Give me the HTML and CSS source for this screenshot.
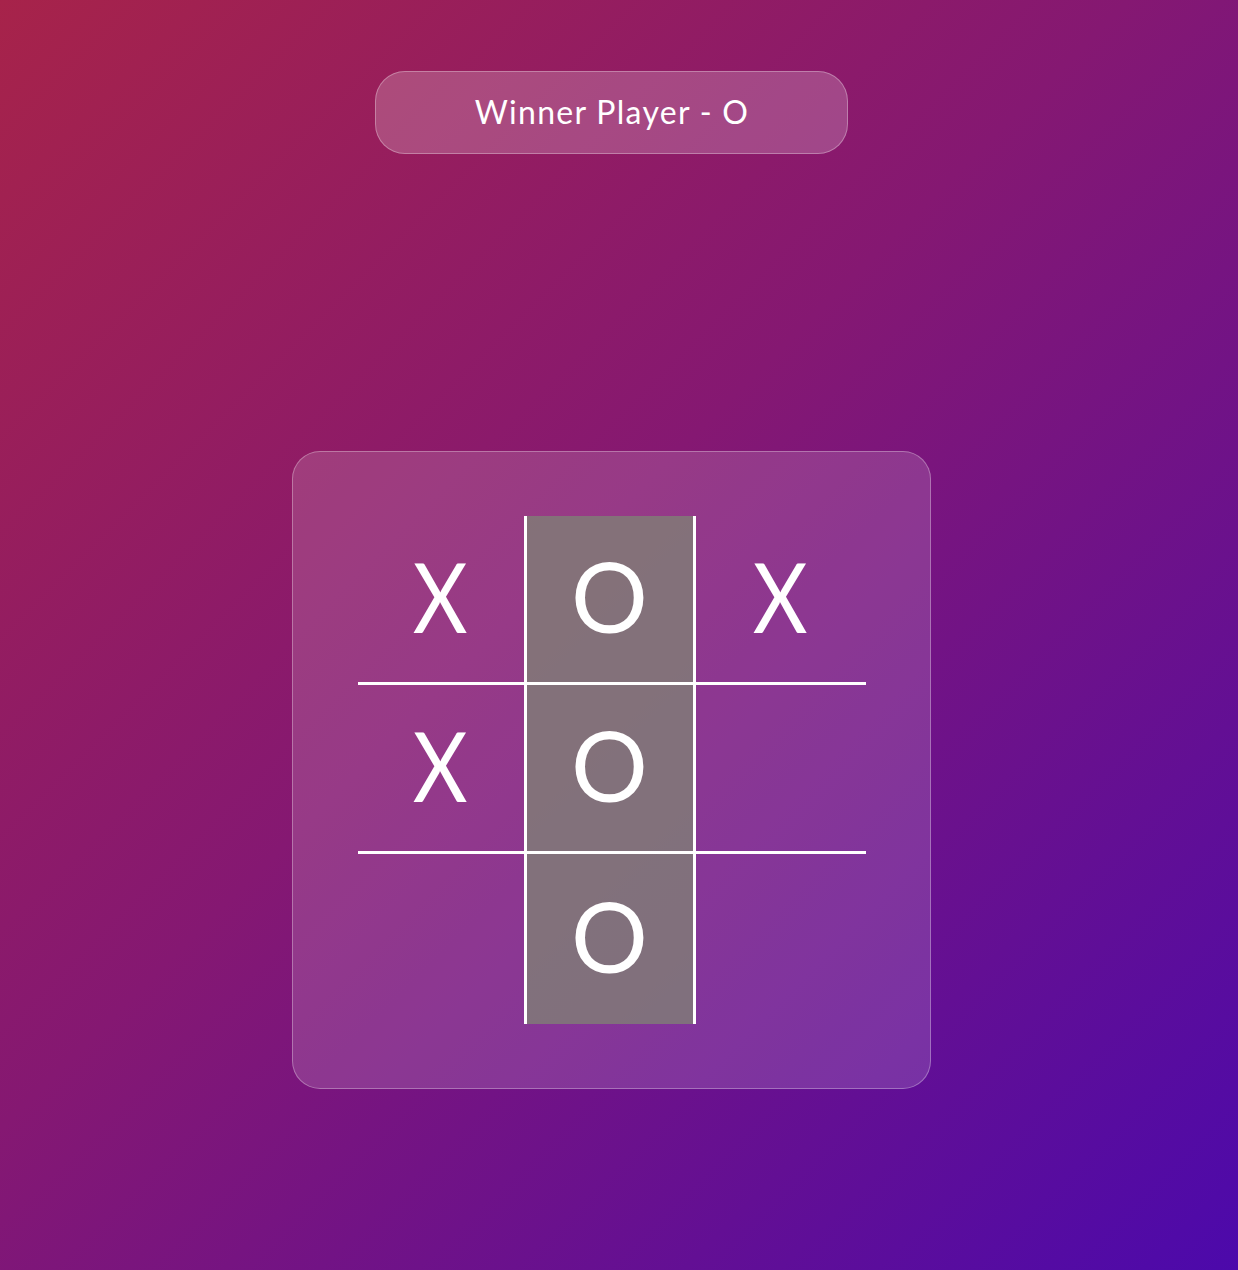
FILE: index.html
```html
<!DOCTYPE html>
<html>
<head>
<meta charset="utf-8">
<link rel="stylesheet" href="styles.css">
</head>
<body>
<main class="page">
  <div class="status">Winner Player - O</div>
  <section class="board-card">
    <div class="board">
      <div class="cell c1 r1"><span class="x">X</span></div>
      <div class="cell c2 r1 win">O</div>
      <div class="cell c3 r1"><span class="x">X</span></div>
      <div class="cell c1 r2"><span class="x">X</span></div>
      <div class="cell c2 r2 win">O</div>
      <div class="cell c3 r2"></div>
      <div class="cell c1 r3"></div>
      <div class="cell c2 r3 win">O</div>
      <div class="cell c3 r3"></div>
    </div>
  </section>
</main>
</body>
</html>
```
FILE: styles.css
```css
html, body {
  margin: 0;
  padding: 0;
}
body {
  width: 1238px;
  height: 1270px;
  background: linear-gradient(135deg, #a7234a 0%, #851872 45%, #4c09ab 100%);
  font-family: "Lato", "Open Sans", sans-serif;
  color: #fff;
  overflow: hidden;
}
.page {
  box-sizing: border-box;
  width: 1238px;
  padding-right: 16px;
  display: flex;
  flex-direction: column;
  align-items: center;
  padding-top: 71px;
}
.status {
  box-sizing: border-box;
  width: 473px;
  height: 83px;
  border-radius: 30px;
  background: rgba(255, 255, 255, 0.2);
  border: 1px solid rgba(255, 255, 255, 0.3);
  display: flex;
  align-items: center;
  justify-content: center;
  font-size: 32px;
  letter-spacing: 1.3px;
  padding-bottom: 3px;
  padding-left: 2px;
}
.board-card {
  box-sizing: border-box;
  margin-top: 297px;
  width: 639px;
  height: 638px;
  border-radius: 28px;
  background: rgba(255, 255, 255, 0.15);
  border: 1px solid rgba(255, 255, 255, 0.3);
  display: flex;
  align-items: center;
  justify-content: center;
  padding: 0 1px 1px 0;
}
.board {
  display: grid;
  grid-template-columns: 169px 169px 170px;
  grid-template-rows: 169px 169px 170px;
  margin-left: 2px;
}
.cell {
  box-sizing: border-box;
  display: flex;
  align-items: center;
  justify-content: center;
  font-size: 96px;
  line-height: 1;
  padding-bottom: 5px;
}
.x {
  display: inline-block;
  transform: scaleX(0.88);
}
.c1, .c2 {
  border-right: 3px solid #fff;
}
.r1, .r2 {
  border-bottom: 3px solid #fff;
}
.win {
  background: rgba(128, 128, 118, 0.8);
}
```
